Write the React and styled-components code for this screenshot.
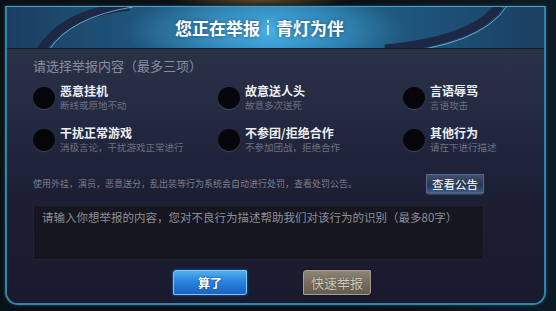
import React from "react";
import styled, { createGlobalStyle } from "styled-components";

const GlobalStyle = createGlobalStyle`
  html, body { margin: 0; padding: 0; background: #0a0d13; }
  body { font-family: "Noto Sans CJK SC", "Noto Sans", sans-serif; }
  * { box-sizing: border-box; }
`;

const Screen = styled.div`
  width: 556px;
  height: 311px;
  overflow: hidden;
  padding: 6px 10px 6px 5px;
  background:
    radial-gradient(ellipse 90px 8px at 260px 0px, rgba(150, 120, 50, 0.55), transparent),
    linear-gradient(to right, #091016 0%, #0a0e15 60%, #0c1b25 100%);
`;

const Frame = styled.div`
  height: 100%;
  display: flex;
  flex-direction: column;
  border: 2px solid #2f86a8;
  border-top: 1px solid #4a9fc0;
  border-radius: 0 0 13px 13px;
  overflow: hidden;
  box-shadow: 0 0 3px rgba(60, 160, 200, 0.5);
`;

const Header = styled.div`
  position: relative;
  height: 42px;
  flex: none;
  display: flex;
  align-items: center;
  justify-content: center;
  padding-right: 32px;
  border-bottom: 1px solid #101a2a;
  background:
    radial-gradient(ellipse 140px 42px at 48% 60%, rgba(80, 190, 245, 0.8), transparent),
    linear-gradient(to right, #1b3f60 0%, #1f5a82 30%, #2678aa 50%, #1f5a82 70%, #1b3f60 100%);
`;

const Arcs = styled.svg`
  position: absolute;
  inset: 0;
  width: 100%;
  height: 100%;
`;

const Title = styled.h1`
  position: relative;
  margin: 0;
  font-size: 17px;
  font-weight: 700;
  color: #ffffff;
  text-shadow: 0 0 4px rgba(20, 60, 100, 0.8);
  display: flex;
  align-items: center;
  gap: 7px;
`;

const Sep = styled.span`
  width: 2px;
  height: 15px;
  background: linear-gradient(to bottom, #e0f2fb 0 3px, transparent 3px 5px, #e0f2fb 5px);
  opacity: 0.85;
`;

const Body = styled.div`
  flex: 1;
  padding: 8px 0 0 26px;
  display: flex;
  flex-direction: column;
  background: linear-gradient(to bottom, #2a3247 0%, #222840 30%, #1b1d31 65%, #1a1a2e 100%);
`;

const SectionTitle = styled.div`
  font-size: 13px;
  line-height: 18px;
  color: #878c9c;
`;

const Grid = styled.div`
  margin-top: 8px;
  display: grid;
  grid-template-columns: repeat(3, 185px);
  row-gap: 13px;
`;

const Item = styled.div`
  display: flex;
  align-items: center;
  gap: 5px;
`;

const Radio = styled.div`
  width: 22px;
  height: 22px;
  border-radius: 50%;
  flex: none;
  background: radial-gradient(circle at 50% 40%, #06060a 60%, #0d0d14 100%);
  box-shadow: 0 1px 1px rgba(130, 130, 150, 0.35);
`;

const ItemText = styled.div`
  display: flex;
  flex-direction: column;
`;

const ItemTitle = styled.div`
  font-size: 12px;
  line-height: 16px;
  font-weight: 700;
  color: #eceef3;
`;

const ItemSub = styled.div`
  font-size: 9.5px;
  line-height: 13px;
  color: #6c7081;
`;

const NoticeRow = styled.div`
  margin-top: 20px;
  width: 451px;
  display: flex;
  align-items: center;
  justify-content: space-between;
`;

const Notice = styled.div`
  font-size: 9px;
  line-height: 12px;
  color: #7a7e8c;
`;

const SmallButton = styled.div`
  width: 58px;
  height: 19px;
  display: flex;
  align-items: center;
  justify-content: center;
  font-size: 11.5px;
  color: #ffffff;
  border: 1px solid #566686;
  background: linear-gradient(to bottom, #41506f 0%, #2a3550 60%, #3b5a86 100%);
  box-shadow: 0 2px 2px -1px rgba(120, 180, 240, 0.6);
`;

const TextBox = styled.div`
  margin-top: 12px;
  width: 451px;
  height: 55px;
  padding: 3px 8px;
  font-size: 11.5px;
  line-height: 16px;
  color: #8c8e99;
  background: #15161f;
  border: 1px solid #222434;
  border-radius: 3px;
  white-space: nowrap;
`;

const ButtonRow = styled.div`
  margin-top: 10px;
  padding-left: 140px;
  display: flex;
  gap: 56px;
`;

const ActionButton = styled.div`
  width: ${(p) => p.$w}px;
  height: 25px;
  display: flex;
  align-items: center;
  justify-content: center;
  font-size: ${(p) => (p.$primary ? 12 : 13)}px;
  font-weight: ${(p) => (p.$primary ? 700 : 400)};
  color: ${(p) => (p.$primary ? "#ffffff" : "#cfc9bb")};
  text-shadow: ${(p) => (p.$primary ? "0 0 2px #0a3a80" : "0 0 1px #3a342a")};
  border: 1px solid ${(p) => (p.$primary ? "#7cc8ff" : "#a89f8c")};
  border-radius: 3px 1px 3px 1px;
  background: ${(p) =>
    p.$primary
      ? "linear-gradient(to bottom, #4fb0f0 0%, #2a84dc 45%, #1a62c4 100%)"
      : "linear-gradient(to bottom, #8c8474 0%, #766e60 50%, #645c50 100%)"};
  box-shadow: ${(p) =>
    p.$primary ? "0 0 3px rgba(40,130,230,0.7)" : "0 0 2px rgba(0,0,0,0.6)"};
`;

const items = [
  { t: "恶意挂机", s: "断线或原地不动" },
  { t: "故意送人头", s: "故意多次送死" },
  { t: "言语辱骂", s: "言语攻击" },
  { t: "干扰正常游戏", s: "消极言论，干扰游戏正常进行" },
  { t: "不参团/拒绝合作", s: "不参加团战，拒绝合作" },
  { t: "其他行为", s: "请在下进行描述" },
];

export default function App() {
  return (
    <>
      <GlobalStyle />
      <Screen>
        <Frame>
          <Header>
            <Arcs viewBox="0 0 537 42" preserveAspectRatio="none">
              <path d="M 34 44 Q 58 6 122 -1" stroke="#1c2846" strokeWidth="9" fill="none" />
              <path d="M 42 44 Q 64 10 126 0" stroke="#7fc0dc" strokeWidth="1" fill="none" opacity="0.8" />
              <path d="M 378 43 Q 468 34 492 -1" stroke="#1c2846" strokeWidth="9" fill="none" />
              <path d="M 380 48 Q 474 40 500 -1" stroke="#7fc0dc" strokeWidth="1" fill="none" opacity="0.8" />
            </Arcs>
            <Title>
              <span>您正在举报</span>
              <Sep />
              <span>青灯为伴</span>
            </Title>
          </Header>
          <Body>
            <SectionTitle>请选择举报内容（最多三项）</SectionTitle>
            <Grid>
              {items.map((it) => (
                <Item key={it.t}>
                  <Radio />
                  <ItemText>
                    <ItemTitle>{it.t}</ItemTitle>
                    <ItemSub>{it.s}</ItemSub>
                  </ItemText>
                </Item>
              ))}
            </Grid>
            <NoticeRow>
              <Notice>使用外挂，演员，恶意送分，乱出装等行为系统会自动进行处罚，查看处罚公告。</Notice>
              <SmallButton>查看公告</SmallButton>
            </NoticeRow>
            <TextBox>请输入你想举报的内容，您对不良行为描述帮助我们对该行为的识别（最多80字）</TextBox>
            <ButtonRow>
              <ActionButton $primary $w={74}>算了</ActionButton>
              <ActionButton $w={68}>快速举报</ActionButton>
            </ButtonRow>
          </Body>
        </Frame>
      </Screen>
    </>
  );
}
